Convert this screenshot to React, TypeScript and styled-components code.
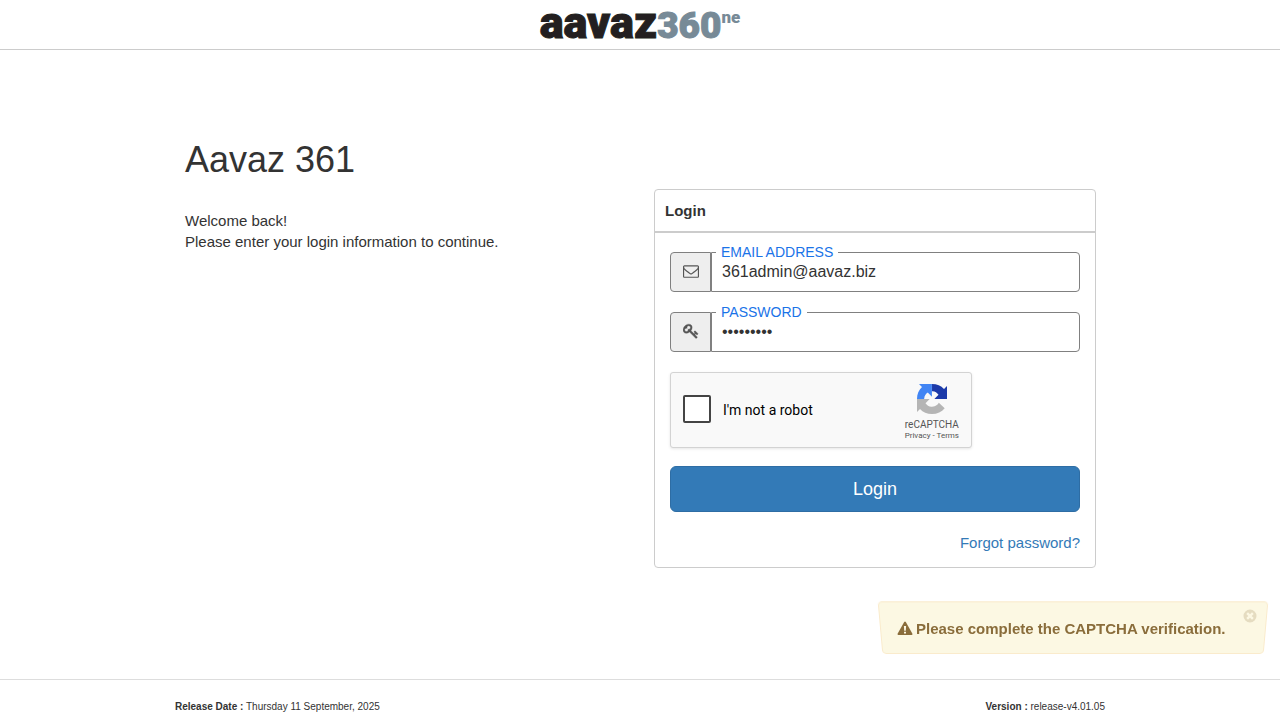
import React from "react";
import styled, { createGlobalStyle } from "styled-components";

const GlobalStyle = createGlobalStyle`
  *, *::before, *::after { box-sizing: border-box; }
  body {
    margin: 0;
    background: #fff;
    color: #333;
    font: 15px/21px "Helvetica Neue", Helvetica, Arial, "Liberation Sans", sans-serif;
  }
`;

const Page = styled.div`
  min-height: 100vh;
  display: flex;
  flex-direction: column;
`;

const Header = styled.header`
  height: 50px;
  display: flex;
  justify-content: center;
  border-bottom: 1px solid #ccc;
`;

const Logo = styled.div`
  display: flex;
  align-items: baseline;
  height: 49px;
  line-height: 46px;
  font-family: Roboto, "Liberation Sans", sans-serif;
  font-weight: 900;
`;

const LogoName = styled.span`
  font-size: 45px;
  color: #231f20;
  -webkit-text-stroke: 1px #231f20;
`;

const LogoNumber = styled.span`
  font-size: 37px;
  color: #778a97;
  -webkit-text-stroke: 1px #778a97;
`;

const LogoSuffix = styled.sup`
  align-self: flex-start;
  padding-top: 9px;
  font-size: 17px;
  line-height: 17px;
  color: #778a97;
`;

const Main = styled.main`
  flex: 1;
  width: 100%;
  max-width: 930px;
  margin: 0 auto;
  padding: 90px 9px 32px 10px;
  display: flex;
  flex-wrap: wrap;
  justify-content: space-between;
  align-items: flex-start;
`;

const Title = styled.h1`
  margin: 0 0 30px;
  font-size: 36px;
  line-height: 40px;
  font-weight: 400;
`;

const Welcome = styled.p`
  margin: 0;
`;

const Panel = styled.section`
  width: 442px;
  max-width: 100%;
  margin-top: 49px;
  border: 1px solid #ccc;
  border-radius: 4px;
`;

const PanelTitle = styled.h2`
  margin: 0;
  padding: 10px;
  border-bottom: 2px solid #ccc;
  font-size: 15px;
  line-height: 21px;
`;

const Form = styled.form`
  display: flex;
  flex-direction: column;
  gap: 20px;
  padding: 19px 15px 14px;
`;

const Field = styled.div`
  position: relative;
  display: flex;
  height: 40px;
`;

const Addon = styled.span`
  width: 41px;
  display: flex;
  align-items: center;
  justify-content: center;
  padding-bottom: 2px;
  border: 1px solid #808080;
  border-radius: 4px 0 0 4px;
  background: #eee;
  color: #555;
`;

const TextInput = styled.input`
  flex: 1;
  min-width: 0;
  padding: 0 10px;
  border: 1px solid #808080;
  border-radius: 0 4px 4px 0;
  background: #fff;
  color: #333;
  font-family: inherit;
  font-size: 16px;
  line-height: 22px;
  outline: none;
`;

const FloatingLabel = styled.label`
  position: absolute;
  top: -8px;
  left: 46px;
  padding: 0 5px;
  background: #fff;
  color: #1a73e8;
  font-size: 14px;
  line-height: 16px;
`;

const Captcha = styled.div`
  width: 302px;
  max-width: 100%;
  height: 76px;
  display: flex;
  align-items: center;
  justify-content: space-between;
  padding: 0 12px;
  border: 1px solid #d3d3d3;
  border-radius: 3px;
  background: #f9f9f9;
  box-shadow: 0 1px 3px rgba(0, 0, 0, 0.1);
  font-family: Roboto, "Liberation Sans", sans-serif;
`;

const CaptchaLabel = styled.label`
  display: flex;
  align-items: center;
  gap: 12px;
  padding-bottom: 2px;
  color: #000;
  font-size: 14px;
  line-height: 19px;
`;

const CaptchaText = styled.span`
  padding-top: 2px;
`;

const CaptchaBox = styled.input`
  appearance: none;
  width: 28px;
  height: 28px;
  margin: 0;
  border: 2px solid #444;
  border-radius: 2px;
  background: #fff;
`;

const CaptchaBrand = styled.div`
  display: flex;
  flex-direction: column;
  align-items: center;
  padding-top: 4px;
  color: #555;
  font-size: 10px;
  line-height: 12px;
`;

const CaptchaName = styled.span`
  padding-top: 4px;
`;

const CaptchaLinks = styled.span`
  font-size: 8px;
  line-height: 10px;
  a { color: inherit; text-decoration: none; }
`;

const LoginButton = styled.button`
  height: 46px;
  margin-top: -2px;
  border: 1px solid #2e6da4;
  border-radius: 6px;
  background: #337ab7;
  color: #fff;
  font-family: inherit;
  font-size: 18px;
  line-height: 24px;
`;

const ForgotLink = styled.a`
  align-self: flex-end;
  color: #337ab7;
  text-decoration: none;
`;

const Footer = styled.footer`
  border-top: 1px solid #ddd;
`;

const FooterRow = styled.div`
  max-width: 930px;
  margin: 0 auto;
  padding: 20px 0 6px;
  display: flex;
  justify-content: space-between;
  font-size: 10px;
  line-height: 14px;
`;

const Toast = styled.div`
  position: fixed;
  right: 14px;
  bottom: 65px;
  width: 386px;
  height: 54px;
  display: flex;
  align-items: center;
  gap: 3px;
  padding: 0 17px;
  color: #8a6d3b;
  font-weight: 700;

  &::before {
    content: "";
    position: absolute;
    inset: 0;
    z-index: -1;
    border: 1px solid #faebcc;
    border-radius: 4px;
    background: #fcf8e3;
    transform: perspective(500px) rotateX(-13deg);
  }
`;

const ToastClose = styled.button`
  position: absolute;
  top: 8px;
  right: 9px;
  width: 14px;
  height: 14px;
  padding: 0;
  border: 0;
  background: none;
  color: #8a6d3b;
  opacity: 0.2;
  svg { display: block; }
`;

const EnvelopeIcon = () => (
  <svg width="16" height="16" viewBox="0 0 1792 1792" fill="currentColor" aria-hidden="true">
    <path d="M1664 1504v-768q-32 36-69 66-268 206-426 338-51 43-83 67t-86.5 48.5-102.5 24.5h-2q-48 0-102.5-24.5t-86.5-48.5-83-67q-158-132-426-338-37-30-69-66v768q0 13 9.5 22.5t22.5 9.5h1472q13 0 22.5-9.5t9.5-22.5zm0-1051v-24.5l-.5-13-3-12.5-5.5-9-9-7.5-14-2.5h-1472q-13 0-22.5 9.5t-9.5 22.5q0 168 147 284 193 152 401 317 6 5 35 29.5t46 37.5 44.5 31.5 50.5 27.5 43 9h2q20 0 43-9t50.5-27.5 44.5-31.5 46-37.5 35-29.5q208-165 401-317 54-43 100.5-115.5t46.5-131.5zm128-37v1088q0 66-47 113t-113 47h-1472q-66 0-113-47t-47-113v-1088q0-66 47-113t113-47h1472q66 0 113 47t47 113z" />
  </svg>
);

const KeyIcon = () => (
  <svg width="16" height="16" viewBox="0 0 1792 1792" fill="currentColor" stroke="currentColor" strokeWidth="40" aria-hidden="true">
    <path d="M832 512q0-80-56-136t-136-56-136 56-56 136q0 42 19 83-41-19-83-19-80 0-136 56t-56 136 56 136 136 56 136-56 56-136q0-42-19-83 41 19 83 19 80 0 136-56t56-136zm851 704q0 17-49 66t-66 49q-9 0-28.5-16t-36.5-33-38.5-40-24.5-26l-96 96 220 220q28 28 28 68 0 42-39 81t-81 39q-40 0-68-28l-671-671q-176 131-365 131-163 0-265.5-102.5t-102.5-265.5q0-160 95-313t248-248 313-95q163 0 265.5 102.5t102.5 265.5q0 189-131 365l355 355 96-96q-3-3-26-24.5t-40-38.5-33-36.5-16-28.5q0-17 49-66t66-49q13 0 23 10 6 6 46 44.5t82 79.5 86.5 86 73 78 28.5 41z" />
  </svg>
);

const CaptchaIcon = () => (
  <svg width="32" height="32" viewBox="0 0 64 64" aria-hidden="true">
    <path fill="#1c3aa9" d="M62 31.955V6l-6 6C50 5.5 42 2 32.05 2v14.35c.485 0 .86.057 1.135.163 4.976.393 9.288 3.14 11.828 7.124l-8.307 8.307z" />
    <path fill="#4285f4" d="M31.862 2H6l6 6C5.5 14 2 22.06 2 32.046h14.26c0-.485.057-.86.163-1.135.393-4.976 3.14-9.288 7.124-11.828l8.307 8.307z" />
    <path fill="#b5b5b5" d="M2 32.045V58l6-6C14 58.5 21.968 62 31.954 62c10.4 0 19.622-4 25.458-11.5l-11.736-11.1a15.55 15.55 0 0 1-4.754 5.334c-2.05 1.6-4.952 2.906-8.968 2.906-.485 0-.86-.057-1.135-.163-4.976-.393-9.288-3.14-11.828-7.124l8.307-8.307z" />
  </svg>
);

const WarningIcon = () => (
  <svg width="16" height="15" viewBox="0 0 16 15" aria-hidden="true">
    <path fill="currentColor" d="M7.2 1Q8 .1 8.8 1l6.6 11.8q.4 1.2-.8 1.2H1.4Q.2 14 .6 12.8z" />
    <path fill="#fcf8e3" d="M6.9 5h2.2L8.8 9.8H7.2zM7 10.7h2v1.8H7z" />
  </svg>
);

const CloseIcon = () => (
  <svg width="14" height="14" viewBox="0 0 14 14" aria-hidden="true">
    <path fill="currentColor" fillRule="evenodd" d="M7 .5a6.5 6.5 0 1 0 0 13 6.5 6.5 0 0 0 0-13zM5 3.3l2 2 2-2L10.7 5l-2 2 2 2L9 10.7l-2-2-2 2L3.3 9l2-2-2-2z" />
  </svg>
);

export default function App() {
  return (
    <Page>
      <GlobalStyle />
      <Header>
        <Logo>
          <LogoName>aavaz</LogoName>
          <LogoNumber>360</LogoNumber>
          <LogoSuffix>ne</LogoSuffix>
        </Logo>
      </Header>

      <Main>
        <div>
          <Title>Aavaz 361</Title>
          <Welcome>
            Welcome back!
            <br />
            Please enter your login information to continue.
          </Welcome>
        </div>

        <Panel>
          <PanelTitle>Login</PanelTitle>
          <Form onSubmit={(e) => e.preventDefault()}>
            <Field>
              <Addon><EnvelopeIcon /></Addon>
              <TextInput id="email" type="email" defaultValue="361admin@aavaz.biz" />
              <FloatingLabel htmlFor="email">EMAIL ADDRESS</FloatingLabel>
            </Field>
            <Field>
              <Addon><KeyIcon /></Addon>
              <TextInput id="password" type="password" defaultValue="admin1234" />
              <FloatingLabel htmlFor="password">PASSWORD</FloatingLabel>
            </Field>
            <Captcha>
              <CaptchaLabel>
                <CaptchaBox type="checkbox" />
                <CaptchaText>I'm not a robot</CaptchaText>
              </CaptchaLabel>
              <CaptchaBrand>
                <CaptchaIcon />
                <CaptchaName>reCAPTCHA</CaptchaName>
                <CaptchaLinks>
                  <a href="#privacy">Privacy</a> - <a href="#terms">Terms</a>
                </CaptchaLinks>
              </CaptchaBrand>
            </Captcha>
            <LoginButton type="submit">Login</LoginButton>
            <ForgotLink href="#forgot">Forgot password?</ForgotLink>
          </Form>
        </Panel>
      </Main>

      <Footer>
        <FooterRow>
          <span><b>Release Date :</b> Thursday 11 September, 2025</span>
          <span><b>Version :</b> release-v4.01.05</span>
        </FooterRow>
      </Footer>

      <Toast role="alert">
        <WarningIcon />
        Please complete the CAPTCHA verification.
        <ToastClose type="button" aria-label="Close"><CloseIcon /></ToastClose>
      </Toast>
    </Page>
  );
}
